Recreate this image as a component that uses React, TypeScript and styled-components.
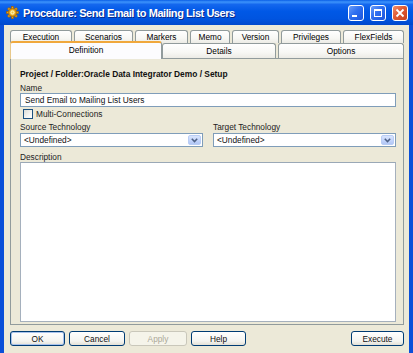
import styled, { createGlobalStyle, css } from "styled-components";

const Global = createGlobalStyle`
  html, body {
    margin: 0;
    padding: 0;
    background: #ece9d8;
  }
  body {
    font-family: "Liberation Sans", Arial, sans-serif;
    font-size: 8.3px;
    color: #000;
  }
`;

const Window = styled.div`
  width: 413px;
  height: 353px;
  display: flex;
  flex-direction: column;
  overflow: hidden;
  background: #ece9d8;
`;

const TitleBar = styled.div`
  height: 25px;
  flex-shrink: 0;
  display: flex;
  align-items: center;
  padding: 0 5px 0 6px;
  gap: 4px;
  background: linear-gradient(
    180deg,
    #0a5ee6 0%,
    #3d93fb 8%,
    #1467ee 18%,
    #0058e6 45%,
    #0054e0 75%,
    #0048cc 100%
  );
`;

const Title = styled.span`
  flex: 1;
  color: #fff;
  font-family: "Liberation Sans", Arial, sans-serif;
  font-weight: bold;
  font-size: 11px;
  letter-spacing: -0.45px;
  text-shadow: 1px 1px 0 #0a2a8a;
  white-space: nowrap;
`;

const CaptionButton = styled.div<{ $close?: boolean }>`
  width: 16px;
  height: 16px;
  box-sizing: border-box;
  border: 1px solid #fff;
  border-radius: 3px;
  display: flex;
  align-items: center;
  justify-content: center;
  margin-left: 2px;
  background: ${(p) =>
    p.$close
      ? "linear-gradient(135deg, #f0906e 0%, #e05a33 45%, #c4401c 100%)"
      : "linear-gradient(135deg, #6b9ef8 0%, #2f6ff0 45%, #1c55dc 100%)"};
`;

const Body = styled.div`
  flex: 1;
  display: flex;
  flex-direction: column;
  min-height: 0;
  border-left: 4px solid #0a4fd9;
  border-right: 4px solid #0a4fd9;
  padding: 5px 5px 0 6px;
`;

const TabRow = styled.div<{ $front?: boolean }>`
  display: flex;
  align-items: flex-end;
  gap: 2px;
  position: relative;
  ${(p) =>
    p.$front
      ? css`
          margin-top: -2px;
          height: 17px;
          z-index: 2;
        `
      : css`
          height: 13px;
        `}
`;

const Tab = styled.div<{ $w: number; $selected?: boolean; $back?: boolean }>`
  width: ${(p) => p.$w}px;
  box-sizing: border-box;
  display: flex;
  align-items: center;
  justify-content: center;
  border: 1px solid #919b9c;
  border-bottom: none;
  border-radius: 3px 3px 0 0;
  background: linear-gradient(180deg, #ffffff 0%, #f7f7f4 60%, #ecebe5 100%);
  white-space: nowrap;
  ${(p) =>
    p.$back &&
    css`
      height: 13px;
    `}
  ${(p) =>
    !p.$back &&
    !p.$selected &&
    css`
      height: 15px;
    `}
  ${(p) =>
    p.$selected &&
    css`
      height: 18px;
      margin-bottom: -1px;
      margin-right: -2px;
      border-top: 2px solid #f0a83c;
      border-left-color: #e8c88a;
      background: #fcfcfe;
      padding-bottom: 2px;
      position: relative;
      z-index: 3;
    `}
`;

const Panel = styled.div`
  height: 267px;
  box-sizing: border-box;
  display: flex;
  flex-direction: column;
  border: 1px solid #919b9c;
  background: #ece9d8;
  padding: 9px 7px 2px 9px;
`;

const Heading = styled.div`
  font-weight: bold;
  font-size: 8.4px;
  height: 11px;
  line-height: 11px;
  margin-top: 1px;
  color: #111;
`;

const Label = styled.div<{ $mt?: number }>`
  height: 10px;
  line-height: 10px;
  margin-top: ${(p) => p.$mt ?? 0}px;
  color: #222;
`;

const TextInput = styled.div`
  height: 14px;
  box-sizing: border-box;
  border: 1px solid #7f9db9;
  background: #fff;
  padding-left: 4px;
  line-height: 12px;
  color: #111;
`;

const CheckRow = styled.label`
  display: flex;
  align-items: center;
  gap: 3px;
  margin-top: 2px;
  height: 10px;
  padding-left: 3px;
  color: #222;
`;

const CheckBox = styled.span`
  width: 10px;
  height: 10px;
  box-sizing: border-box;
  border: 1px solid #1c5180;
  background: linear-gradient(135deg, #dcdcd6 0%, #f5f5f2 60%, #fff 100%);
`;

const Columns = styled.div`
  display: grid;
  grid-template-columns: 1fr 1fr;
  column-gap: 10px;
  margin-top: 3px;
`;

const Field = styled.div`
  display: flex;
  flex-direction: column;
  gap: 1px;
`;

const Select = styled.div`
  height: 14px;
  box-sizing: border-box;
  border: 1px solid #7f9db9;
  background: #fff;
  display: flex;
  align-items: stretch;
`;

const SelectText = styled.span`
  flex: 1;
  padding-left: 3px;
  line-height: 12px;
  color: #111;
`;

const ArrowButton = styled.span`
  width: 13px;
  margin: 1px;
  box-sizing: border-box;
  border: 1px solid #b9cdf5;
  border-radius: 2px;
  background: linear-gradient(180deg, #d9e5fd 0%, #c1d3fb 60%, #b2c7f5 100%);
  display: flex;
  align-items: center;
  justify-content: center;
`;

const TextArea = styled.div`
  flex: 1;
  border: 1px solid #a5b0bd;
  border-top-color: #9aa8b6;
  background: #fff;
`;

const ButtonBar = styled.div`
  display: flex;
  align-items: center;
  gap: 4px;
  margin-top: 6px;
`;

const Button = styled.div<{ $w: number; $disabled?: boolean; $default?: boolean; $push?: boolean }>`
  width: ${(p) => p.$w}px;
  height: 15px;
  box-sizing: border-box;
  display: flex;
  align-items: center;
  justify-content: center;
  border: 1px solid #003c74;
  border-radius: 3px;
  background: linear-gradient(180deg, #ffffff 0%, #f4f4f0 70%, #e3e0d6 100%);
  color: #111;
  ${(p) =>
    p.$default &&
    css`
      box-shadow: inset 0 0 0 1px #a9c3ec;
    `}
  ${(p) =>
    p.$disabled &&
    css`
      border-color: #c9c7ba;
      background: #f5f4ea;
      color: #aca899;
    `}
  ${(p) =>
    p.$push &&
    css`
      margin-left: auto;
    `}
`;

const GearIcon = () => (
  <svg width="13" height="13" viewBox="0 0 13 13">
    <g fill="#e8a418" stroke="#9a5a00" strokeWidth="0.6">
      {[0, 45, 90, 135, 180, 225, 270, 315].map((a) => (
        <rect key={a} x="5.4" y="0.4" width="2.2" height="3" transform={`rotate(${a} 6.5 6.5)`} />
      ))}
      <circle cx="6.5" cy="6.5" r="4" />
    </g>
    <circle cx="6.5" cy="6.5" r="2.2" fill="#fff3b0" />
    <circle cx="6.5" cy="6.5" r="1" fill="#f2c23c" />
  </svg>
);

const Chevron = () => (
  <svg width="7" height="5" viewBox="0 0 7 5">
    <path d="M0.8 0.8 L3.5 3.6 L6.2 0.8" fill="none" stroke="#4d6185" strokeWidth="1.5" />
  </svg>
);

const backTabs: [string, number][] = [
  ["Execution", 62],
  ["Scenarios", 59],
  ["Markers", 53],
  ["Memo", 40],
  ["Version", 47],
  ["Privileges", 60],
  ["FlexFields", 61],
];

export default function App() {
  return (
    <>
      <Global />
      <Window>
        <TitleBar>
          <GearIcon />
          <Title>Procedure: Send Email to Mailing List Users</Title>
          <CaptionButton>
            <svg width="14" height="14" viewBox="0 0 14 14">
              <rect x="3" y="9" width="5" height="2" fill="#fff" />
            </svg>
          </CaptionButton>
          <CaptionButton>
            <svg width="14" height="14" viewBox="0 0 14 14">
              <rect x="3.5" y="3.5" width="7" height="7" fill="none" stroke="#fff" strokeWidth="1" />
              <rect x="3" y="3" width="8" height="2" fill="#fff" />
            </svg>
          </CaptionButton>
          <CaptionButton $close>
            <svg width="14" height="14" viewBox="0 0 14 14">
              <path d="M3.5 3.5 L10.5 10.5 M10.5 3.5 L3.5 10.5" stroke="#fff" strokeWidth="1.8" />
            </svg>
          </CaptionButton>
        </TitleBar>
        <Body>
          <TabRow>
            {backTabs.map(([name, w]) => (
              <Tab key={name} $w={w} $back>
                {name}
              </Tab>
            ))}
          </TabRow>
          <TabRow $front>
            <Tab $w={152} $selected>
              Definition
            </Tab>
            <Tab $w={114}>Details</Tab>
            <Tab $w={126}>Options</Tab>
          </TabRow>
          <Panel>
            <Heading>Project / Folder:Oracle Data Integrator Demo / Setup</Heading>
            <Label $mt={3}>Name</Label>
            <TextInput>Send Email to Mailing List Users</TextInput>
            <CheckRow>
              <CheckBox />
              Multi-Connections
            </CheckRow>
            <Columns>
              <Field>
                <Label>Source Technology</Label>
                <Select>
                  <SelectText>&lt;Undefined&gt;</SelectText>
                  <ArrowButton>
                    <Chevron />
                  </ArrowButton>
                </Select>
              </Field>
              <Field>
                <Label>Target Technology</Label>
                <Select>
                  <SelectText>&lt;Undefined&gt;</SelectText>
                  <ArrowButton>
                    <Chevron />
                  </ArrowButton>
                </Select>
              </Field>
            </Columns>
            <Label $mt={5}>Description</Label>
            <TextArea />
          </Panel>
          <ButtonBar>
            <Button $w={55} $default>
              OK
            </Button>
            <Button $w={56}>Cancel</Button>
            <Button $w={58} $disabled>
              Apply
            </Button>
            <Button $w={55}>Help</Button>
            <Button $w={53} $push>
              Execute
            </Button>
          </ButtonBar>
        </Body>
      </Window>
    </>
  );
}
